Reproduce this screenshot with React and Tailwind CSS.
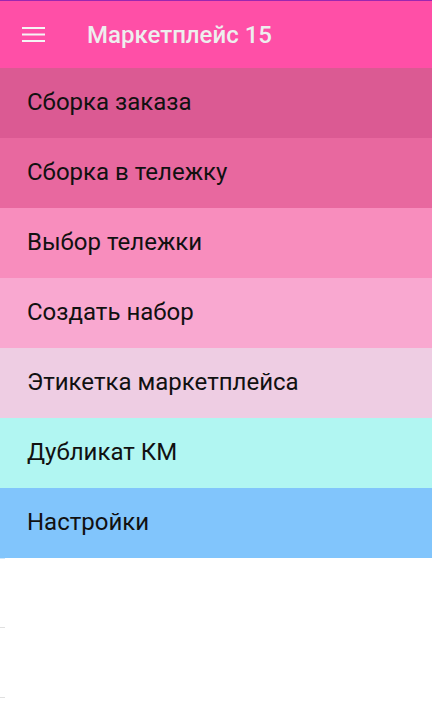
export default function App() {
  const items = [
    ["Сборка заказа", "bg-[#db5a93]"],
    ["Сборка в тележку", "bg-[#e8689f]"],
    ["Выбор тележки", "bg-[#f88dbd]"],
    ["Создать набор", "bg-[#f9a8d0]"],
    ["Этикетка маркетплейса", "bg-[#eecde3]"],
    ["Дубликат КМ", "bg-[#b1f6f2]"],
    ["Настройки", "bg-[#81c5fc]"],
  ];
  return (
    <div className="w-[432px] h-[715px] bg-white overflow-hidden" style={{ fontFamily: "Roboto, 'Noto Sans', sans-serif" }}>
      <div className="h-[1px] bg-[#9c27b0]" />
      <div className="h-[67px] bg-[#ff4fa7] flex items-center">
        <div className="w-[87px] flex pl-[22px] pb-[2px]">
          <svg width="23" height="16" viewBox="0 0 23 16">
            <rect x="0" y="1" width="23" height="2" fill="#f5f5f5" />
            <rect x="0" y="7.5" width="23" height="2" fill="#f5f5f5" />
            <rect x="0" y="14" width="23" height="2" fill="#f5f5f5" />
          </svg>
        </div>
        <div className="text-[24px] font-medium text-[#eeeeee] leading-none">Маркетплейс 15</div>
      </div>
      {items.map(([t, c]) => (
        <div key={t} className={`h-[70px] flex items-center pl-[27px] pb-[3px] ${c}`}>
          <span className="text-[24px] text-[#111] leading-none">{t}</span>
        </div>
      ))}
      <div className="h-[70px] flex flex-col justify-between">
        <div className="w-[5px] h-[1px] bg-[#cde8fd]" />
        <div className="w-[5px] h-[1px] bg-[#e0e0e0]" />
      </div>
      <div className="h-[70px] flex flex-col justify-end">
        <div className="w-[5px] h-[1px] bg-[#e0e0e0]" />
      </div>
    </div>
  );
}
